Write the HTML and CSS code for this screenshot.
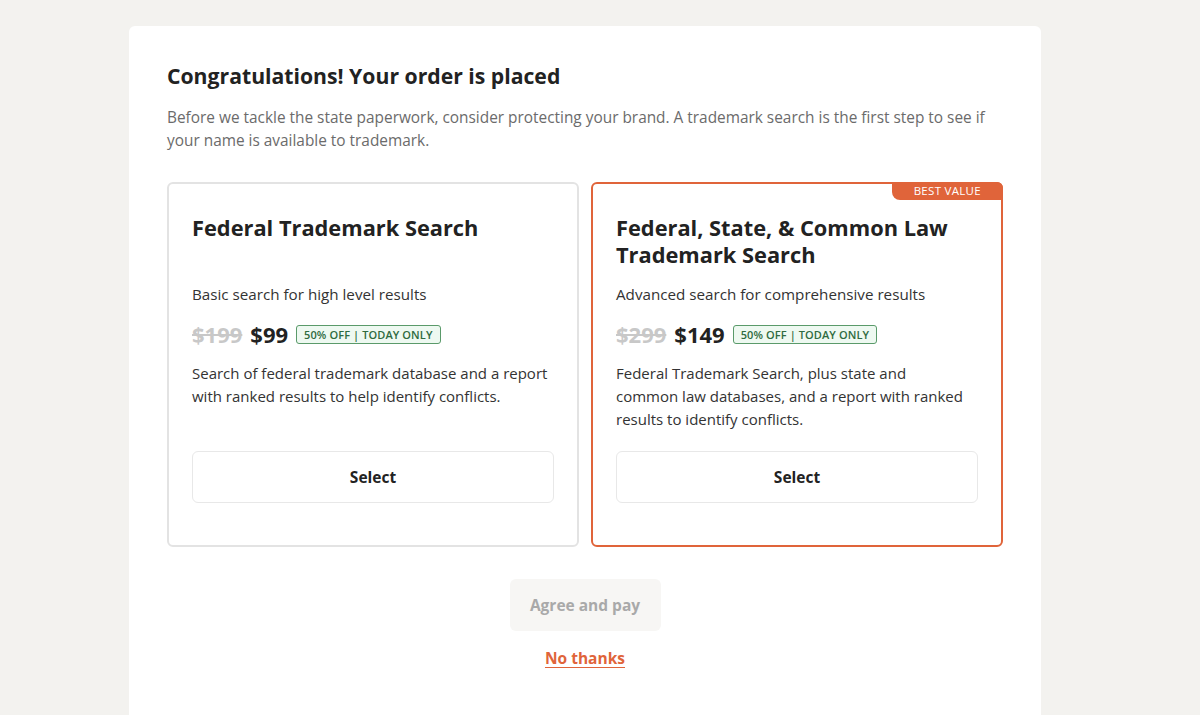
FILE: index.html
```html
<!DOCTYPE html>
<html lang="en">
<head>
<meta charset="utf-8">
<title>Order placed</title>
<link rel="stylesheet" href="styles.css">
</head>
<body>
<main class="panel">
  <h1 class="title">Congratulations! Your order is placed</h1>
  <p class="intro">Before we tackle the state paperwork, consider protecting your brand. A trademark search is the first step to see if your name is available to trademark.</p>
  <div class="cards">
    <section class="card">
      <h2 class="card-title">Federal Trademark Search</h2>
      <p class="card-sub">Basic search for high level results</p>
      <div class="price-row">
        <span class="old">$199</span>
        <span class="new">$99</span>
        <span class="deal">50% OFF | TODAY ONLY</span>
      </div>
      <p class="desc">Search of federal trademark database and a report with ranked results to help identify conflicts.</p>
      <button class="select" type="button">Select</button>
    </section>
    <section class="card card-best">
      <span class="ribbon">BEST VALUE</span>
      <h2 class="card-title">Federal, State, &amp; Common Law Trademark Search</h2>
      <p class="card-sub">Advanced search for comprehensive results</p>
      <div class="price-row">
        <span class="old">$299</span>
        <span class="new">$149</span>
        <span class="deal">50% OFF | TODAY ONLY</span>
      </div>
      <p class="desc">Federal Trademark Search, plus state and common&nbsp;law databases, and a report with ranked results to identify conflicts.</p>
      <button class="select" type="button">Select</button>
    </section>
  </div>
  <div class="actions">
    <button class="pay" type="button" disabled>Agree and pay</button>
    <a class="nothanks" href="#">No thanks</a>
  </div>
</main>
</body>
</html>
```
FILE: styles.css
```css
* { box-sizing: border-box; }
html, body { margin: 0; height: 100%; }
body {
  background: #f3f2ef;
  font-family: "Open Sans", "Liberation Sans", sans-serif;
  color: #222;
  overflow: hidden;
}
.panel {
  width: 912px;
  margin: 26px 0 0 129px;
  background: #fff;
  border-radius: 6px;
  padding: 36px 38px 40px;
  min-height: 720px;
}
.title {
  margin: 0;
  font-size: 21.2px;
  line-height: 28px;
  font-weight: 700;
  color: #222;
}
.intro {
  margin: 16px 0 0;
  font-size: 15.4px;
  line-height: 23px;
  color: #6b6b6b;
}
.cards {
  margin-top: 30px;
  display: grid;
  grid-template-columns: 1fr 1fr;
  gap: 12px;
}
.card {
  position: relative;
  border: 2px solid #e3e3e3;
  border-radius: 6px;
  padding: 30px 23px 42px;
  display: flex;
  flex-direction: column;
  min-height: 365px;
}
.card-best { border-color: #e0643a; }
.ribbon {
  position: absolute;
  top: -2px;
  right: -2px;
  background: #e0643a;
  color: #fff;
  font-size: 11.5px;
  line-height: 18px;
  letter-spacing: 0.3px;
  padding: 0 22px;
  border-radius: 0 6px 0 8px;
}
.card-title {
  margin: 0;
  font-size: 21.8px;
  line-height: 27px;
  font-weight: 700;
  min-height: 54px;
}
.card-sub {
  margin: 15px 0 0;
  font-size: 15.2px;
  line-height: 23px;
  color: #333;
}
.price-row {
  margin-top: 14px;
  display: flex;
  align-items: center;
  gap: 8px;
  height: 28px;
}
.old {
  font-size: 22px;
  font-weight: 700;
  color: #c8c8c8;
  text-decoration: line-through;
}
.new {
  font-size: 22px;
  font-weight: 700;
  color: #222;
}
.deal {
  border: 1px solid #5a9a6a;
  background: #eef9f1;
  color: #2f6b3f;
  font-size: 11px;
  line-height: 17px;
  font-weight: 600;
  letter-spacing: 0.1px;
  padding: 0 7px;
  border-radius: 3px;
}
.desc {
  margin: 14px 0 20px;
  font-size: 15px;
  line-height: 23px;
  color: #333;
}
.select {
  margin-top: auto;
  height: 52px;
  background: #fff;
  border: 1px solid #e8e8e8;
  border-radius: 6px;
  font-family: inherit;
  font-size: 15.5px;
  font-weight: 700;
  color: #222;
}
.actions {
  margin-top: 32px;
  display: flex;
  flex-direction: column;
  align-items: center;
}
.pay {
  width: 151px;
  height: 52px;
  border: none;
  background: #f7f6f4;
  border-radius: 6px;
  font-family: inherit;
  font-size: 15.5px;
  font-weight: 700;
  color: #a9a9a9;
}
.nothanks {
  margin-top: 17px;
  font-size: 15.5px;
  line-height: 20px;
  font-weight: 700;
  color: #e0643a;
  text-decoration: underline;
  text-underline-offset: 3px;
}
```
